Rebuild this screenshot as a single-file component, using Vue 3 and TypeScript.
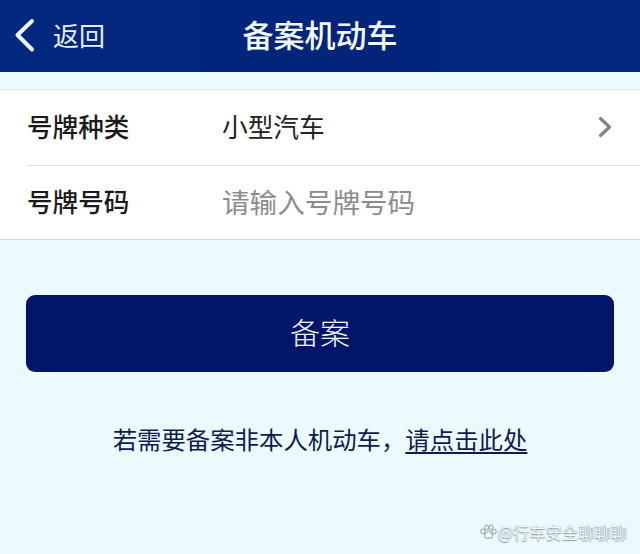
<script setup lang="ts">
const rows: { label: string; value: string; placeholder: boolean; arrow: boolean }[] = [
  { label: '号牌种类', value: '小型汽车', placeholder: false, arrow: true },
  { label: '号牌号码', value: '请输入号牌号码', placeholder: true, arrow: false },
]
</script>

<template>
  <div class="page">
    <header class="header">
      <div class="back">
        <svg class="back-icon" width="22" height="36" viewBox="0 0 22 36" fill="none">
          <path d="M19 4 L4.5 18 L19 32.5" stroke="#f2f8fb" stroke-width="4" stroke-linecap="round" stroke-linejoin="round" />
        </svg>
        <span class="back-text">返回</span>
      </div>
      <h1 class="title">备案机动车</h1>
    </header>

    <section class="list">
      <div v-for="row in rows" :key="row.label" class="row">
        <span class="label">{{ row.label }}</span>
        <span class="value" :class="{ placeholder: row.placeholder }">{{ row.value }}</span>
        <svg v-if="row.arrow" class="arrow" width="14" height="22" viewBox="0 0 14 22" fill="none">
          <path d="M2.5 2.5 L11.5 11 L2.5 19.5" stroke="#808488" stroke-width="3.2" stroke-linecap="round" stroke-linejoin="round" />
        </svg>
      </div>
    </section>

    <div class="action">
      <button class="submit" type="button">备案</button>
    </div>

    <p class="hint">若需要备案非本人机动车，<span class="link">请点击此处</span></p>

    <div class="watermark">
      <svg width="17" height="16" viewBox="0 0 17 16" fill="none">
        <g stroke="#a9b3b8" stroke-width="1.3" fill="#f4fbfd">
          <ellipse cx="3" cy="7.5" rx="1.9" ry="2.4" />
          <ellipse cx="6.5" cy="3.5" rx="1.9" ry="2.4" />
          <ellipse cx="11" cy="3.5" rx="1.9" ry="2.4" />
          <ellipse cx="14.2" cy="7.5" rx="1.9" ry="2.4" />
          <path d="M8.6 7.4 C6.5 7.4 4.6 10.2 4.6 12.3 C4.6 14.6 7.2 14.2 8.6 14 C10 14.2 12.6 14.6 12.6 12.3 C12.6 10.2 10.7 7.4 8.6 7.4 Z" />
        </g>
      </svg>
      <span>@行车安全聊聊聊</span>
    </div>
  </div>
</template>

<style>
html,
body {
  margin: 0;
  padding: 0;
  background: #ebfafc;
}
</style>

<style scoped>
.page {
  position: relative;
  width: 640px;
  height: 554px;
  overflow: hidden;
  background: #ebfafc;
  font-family: "Noto Sans CJK SC", "Liberation Sans", sans-serif;
}

.header {
  position: relative;
  display: flex;
  align-items: center;
  justify-content: center;
  height: 72px;
  margin-bottom: 18px;
  padding-bottom: 5px;
  box-sizing: border-box;
  background: linear-gradient(90deg, #03287f 0%, #02247a 50%, #03287f 100%);
  color: #f3f9fc;
}

.back {
  position: absolute;
  left: 13px;
  top: 17px;
  display: flex;
  align-items: center;
  gap: 18px;
  height: 36px;
}

.back-icon {
  display: block;
}

.back-text {
  font-size: 26px;
  font-weight: 400;
  line-height: 36px;
  color: #e6f1f7;
}

.title {
  margin: 0;
  font-size: 31px;
  font-weight: 500;
  line-height: 36px;
}

.list {
  background: #ffffff;
  border-top: 1px solid #d5e5e8;
  border-bottom: 1px solid #d6dcdd;
  box-sizing: border-box;
  height: 151px;
  margin-top: -1px;
}

.row {
  position: relative;
  display: flex;
  align-items: center;
  height: 75px;
  margin-left: 27px;
  padding-right: 28px;
  box-sizing: border-box;
}

.row + .row {
  border-top: 1px solid #dcdcdc;
}

.label {
  width: 195px;
  flex-shrink: 0;
  padding-bottom: 5px;
  font-size: 25.6px;
  font-weight: 500;
  color: #1a1a1a;
}

.value {
  flex: 1;
  padding-bottom: 5px;
  font-size: 25.7px;
  font-weight: 400;
  color: #222222;
}

.value.placeholder {
  font-size: 27.6px;
  color: #8c8c8c;
}

.arrow {
  display: block;
  margin-top: -1px;
}

.action {
  padding: 55px 26px 0;
}

.submit {
  display: block;
  width: 100%;
  height: 77px;
  padding: 0 0 5px;
  border: none;
  border-radius: 9px;
  background: #021669;
  color: #f5f8fc;
  font-family: inherit;
  font-size: 30px;
  font-weight: 300;
}

.hint {
  margin: 50px 0 0;
  text-align: center;
  font-size: 24.4px;
  line-height: 34px;
  font-weight: 400;
  color: #0f1b52;
}

.link {
  text-decoration: underline;
  text-underline-offset: 3px;
}

.watermark {
  position: absolute;
  right: 13px;
  top: 522px;
  display: flex;
  align-items: center;
  gap: 1px;
  font-size: 16.3px;
  line-height: 20px;
  color: #f2fafc;
  text-shadow: 0 0 1px #7f8d94, 0 1px 1px #8d999f;
}
</style>
